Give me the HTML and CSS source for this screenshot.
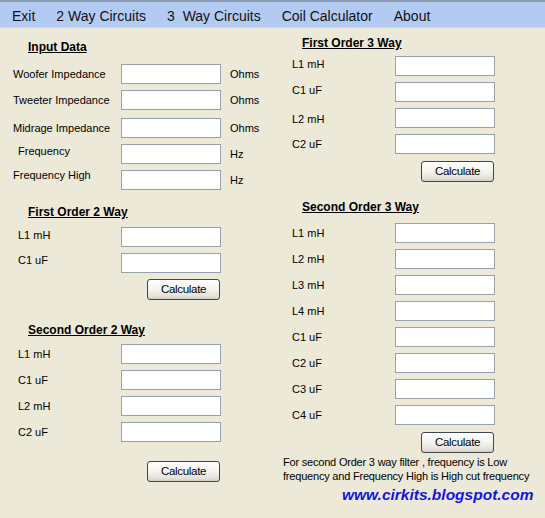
FILE: index.html
```html
<!DOCTYPE html>
<html>
<head>
<meta charset="utf-8">
<link rel="stylesheet" href="styles.css">
</head>
<body>
<div class="menubar">
  <span class="mi">Exit</span>
  <span class="mi">2 Way Circuits</span>
  <span class="mi">3&nbsp; Way Circuits</span>
  <span class="mi">Coil Calculator</span>
  <span class="mi">About</span>
</div>
<div class="main">
  <div class="col left">
    <div class="hd hd-input">Input Data</div>
    <div class="row"><span class="lbl">Woofer Impedance</span><span class="box"></span><span class="unit">Ohms</span></div>
    <div class="row g6"><span class="lbl">Tweeter Impedance</span><span class="box"></span><span class="unit">Ohms</span></div>
    <div class="row g8"><span class="lbl">Midrage Impedance</span><span class="box"></span><span class="unit">Ohms</span></div>
    <div class="row g6"><span class="lbl ind up6">Frequency</span><span class="box"></span><span class="unit">Hz</span></div>
    <div class="row g6"><span class="lbl up9">Frequency High</span><span class="box"></span><span class="unit">Hz</span></div>

    <div class="hd hd-f2">First Order 2 Way</div>
    <div class="row g8"><span class="lbl ind up4">L1 mH</span><span class="box"></span></div>
    <div class="row g6"><span class="lbl ind up6">C1 uF</span><span class="box"></span></div>
    <div class="btnrow g6"><span class="btn">Calculate</span></div>

    <div class="hd hd-s2">Second Order 2 Way</div>
    <div class="row g7"><span class="lbl ind">L1 mH</span><span class="box"></span></div>
    <div class="row g6"><span class="lbl ind">C1 uF</span><span class="box"></span></div>
    <div class="row g6"><span class="lbl ind">L2 mH</span><span class="box"></span></div>
    <div class="row g6"><span class="lbl ind">C2 uF</span><span class="box"></span></div>
    <div class="btnrow g19"><span class="btn">Calculate</span></div>
  </div>

  <div class="col right">
    <div class="hd hd-f3">First Order 3 Way</div>
    <div class="row g6"><span class="lbl ind up4">L1 mH</span><span class="box"></span></div>
    <div class="row g6"><span class="lbl ind up4">C1 uF</span><span class="box"></span></div>
    <div class="row g6"><span class="lbl ind dn3">L2 mH</span><span class="box"></span></div>
    <div class="row g6"><span class="lbl ind">C2 uF</span><span class="box"></span></div>
    <div class="btnrow g7"><span class="btn">Calculate</span></div>

    <div class="hd hd-s3">Second Order 3 Way</div>
    <div class="row g9"><span class="lbl ind">L1 mH</span><span class="box"></span></div>
    <div class="row g6"><span class="lbl ind">L2 mH</span><span class="box"></span></div>
    <div class="row g6"><span class="lbl ind">L3 mH</span><span class="box"></span></div>
    <div class="row g6"><span class="lbl ind">L4 mH</span><span class="box"></span></div>
    <div class="row g6"><span class="lbl ind">C1 uF</span><span class="box"></span></div>
    <div class="row g6"><span class="lbl ind">C2 uF</span><span class="box"></span></div>
    <div class="row g6"><span class="lbl ind">C3 uF</span><span class="box"></span></div>
    <div class="row g6"><span class="lbl ind">C4 uF</span><span class="box"></span></div>
    <div class="btnrow g7"><span class="btn">Calculate</span></div>
    <p class="note">For second Order 3 way filter , frequency is Low<br>frequency and Frequency High is High cut frequency</p>
    <div class="url">www.cirkits.blogspot.com</div>
  </div>
</div>
</body>
</html>
```

FILE: styles.css
```css
html, body {
  margin: 0;
  padding: 0;
}
body {
  width: 545px;
  height: 518px;
  background: #ECE9D8;
  font-family: "Liberation Sans", Arial, sans-serif;
  color: #000;
  overflow: hidden;
}
.menubar {
  height: 25px;
  border-top: 2px solid #8A9AAE;
  border-bottom: 1px solid #C8D8F4;
  background: #B3CBF3;
  display: flex;
  align-items: center;
  gap: 21px;
  padding-left: 12px;
  font-size: 14px;
  line-height: 16px;
  color: #111;
}
.mi {
  white-space: nowrap;
  padding-top: 2px;
}
.main {
  display: flex;
}
.col {
  display: flex;
  flex-direction: column;
}
.left {
  width: 283px;
  padding-left: 13px;
  box-sizing: border-box;
}
.right {
  width: 262px;
}
.hd {
  font-weight: bold;
  font-size: 12px;
  line-height: 14px;
  text-decoration: underline;
  text-underline-offset: 1px;
  padding-left: 15px;
  white-space: nowrap;
}
.right .hd {
  padding-left: 19px;
}
.hd-input { margin-top: 12px; margin-bottom: 10px; }
.hd-f2 { margin-top: 15px; }
.hd-s2 { margin-top: 23px; }
.hd-f3 { margin-top: 8px; }
.hd-s3 { margin-top: 18px; }

.row {
  display: flex;
  align-items: center;
  height: 20px;
  font-size: 11px;
  line-height: 13px;
}
.g6 { margin-top: 6px; }
.g7 { margin-top: 7px; }
.g8 { margin-top: 8px; }
.g9 { margin-top: 9px; }
.g19 { margin-top: 19px; }

.lbl {
  width: 108px;
  flex: none;
  white-space: nowrap;
}
.right .lbl {
  width: 112px;
  padding-left: 9px;
  box-sizing: border-box;
}
.left .lbl.ind {
  padding-left: 5px;
  box-sizing: border-box;
}
.up4 { margin-bottom: 4px; }
.up6 { margin-bottom: 6px; }
.up9 { margin-bottom: 9px; }
.dn3 { margin-top: 3px; }

.box {
  width: 100px;
  height: 20px;
  box-sizing: border-box;
  flex: none;
  background: #fff;
  border: 1px solid #98A2AC;
}
.unit {
  margin-left: 9px;
}
.btnrow {
  display: flex;
  width: 207px;
  justify-content: flex-end;
}
.right .btnrow {
  width: 211px;
}
.btn {
  width: 73px;
  height: 21px;
  box-sizing: border-box;
  border: 1px solid #3E4650;
  border-radius: 3px;
  background: linear-gradient(#FFFFFF 0%, #F4F3EE 50%, #E4E1D8 85%, #D2CDC0 100%);
  font-size: 11.5px;
  letter-spacing: -0.3px;
  line-height: 19px;
  text-align: center;
  color: #000;
}
.note {
  margin: 2px 0 0 0;
  font-size: 11px;
  letter-spacing: -0.2px;
  line-height: 14px;
  white-space: nowrap;
}
.url {
  margin-top: 3px;
  padding-left: 59px;
  font-size: 15.5px;
  line-height: 18px;
  font-weight: bold;
  font-style: italic;
  color: #1414E6;
  white-space: nowrap;
}
```
